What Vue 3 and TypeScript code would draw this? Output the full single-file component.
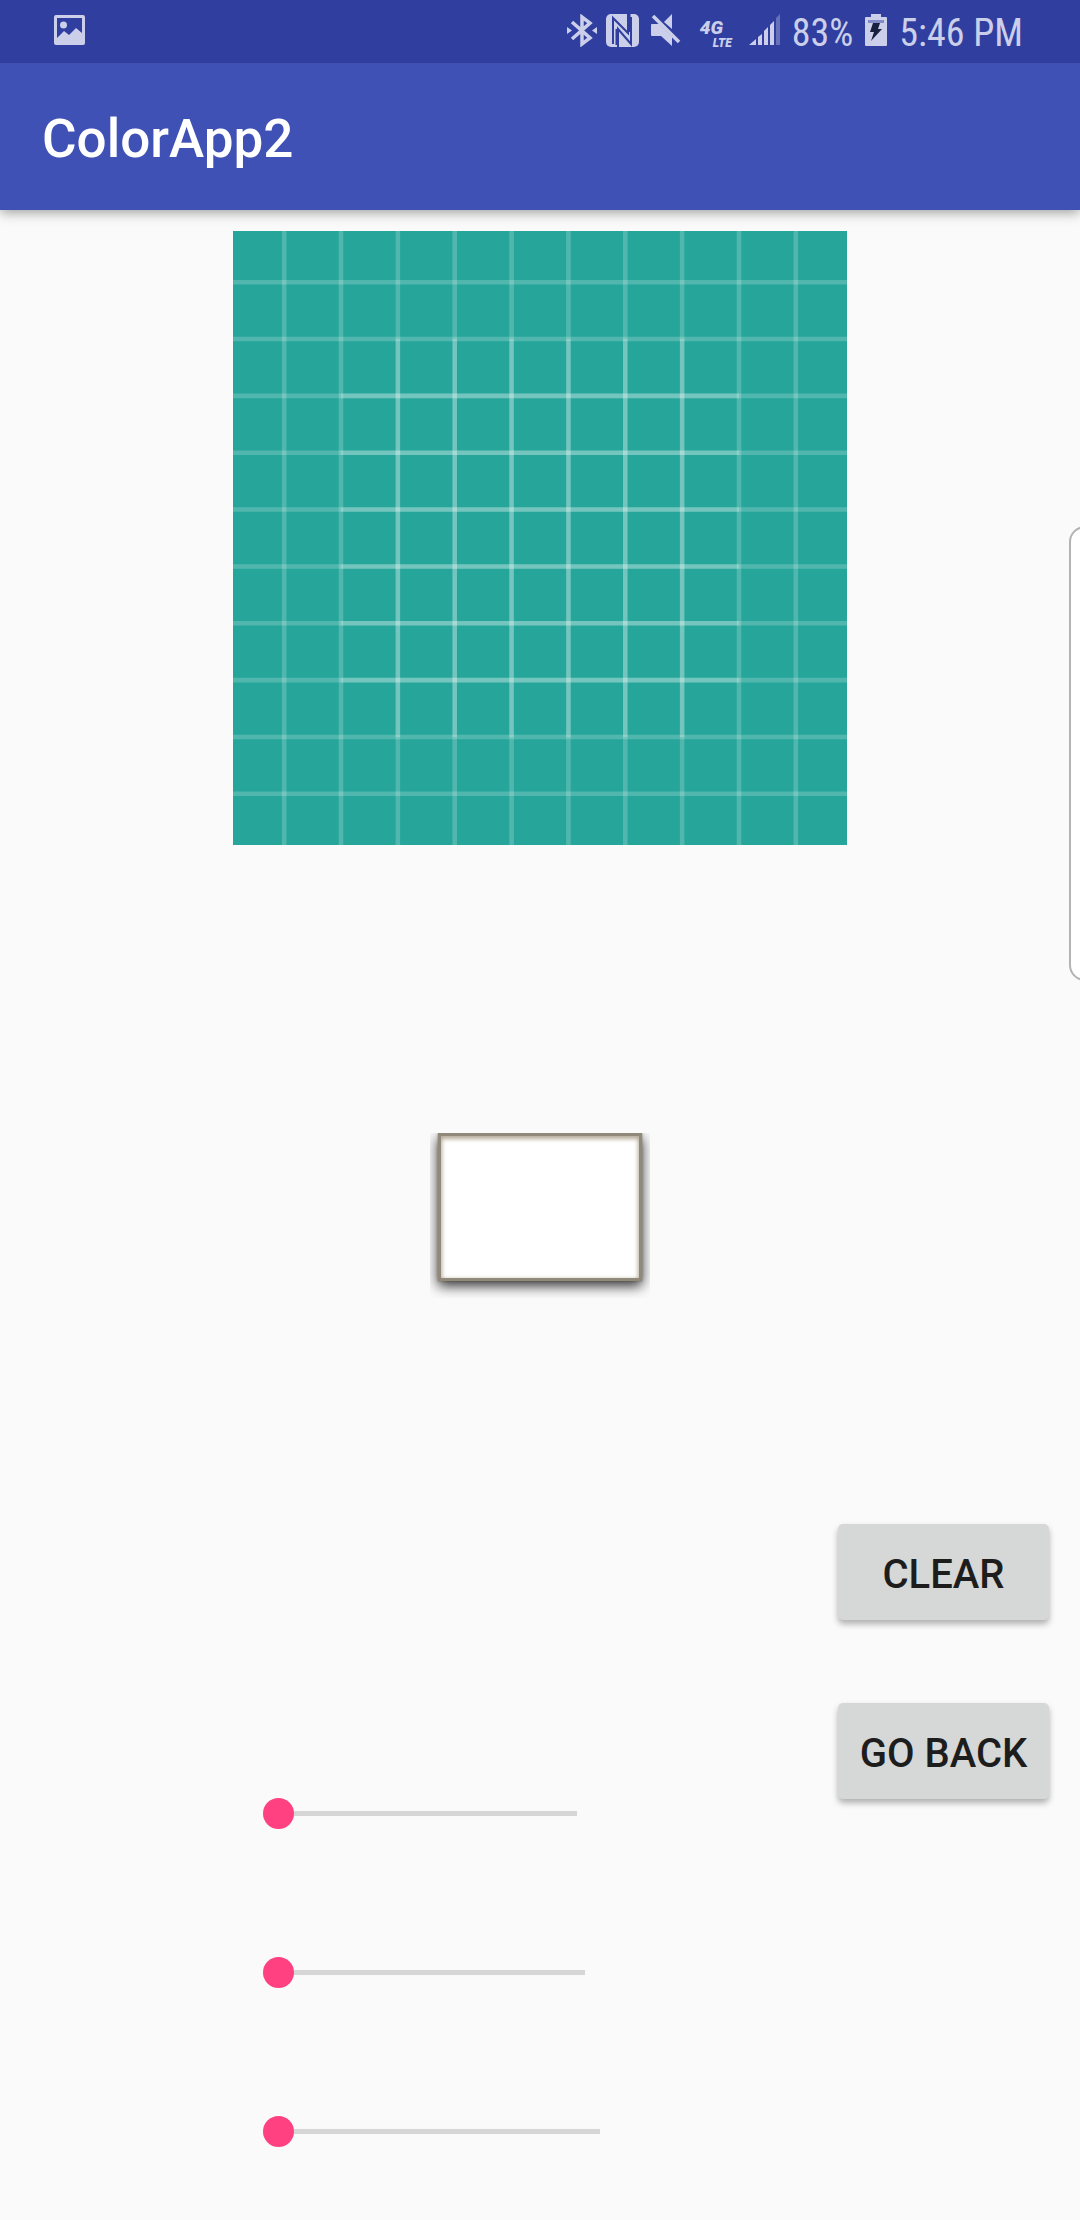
<script setup lang="ts">
import { ref } from 'vue'

interface Channel {
  name: string
  width: number
  value: number
}

const outerLines: number[] = [9, 19, 29, 39, 49, 59, 69, 79, 89, 99]
const innerLines: number[] = [29, 39, 49, 59, 69, 79]

const channels = ref<Channel[]>([
  { name: 'Red', width: 314, value: 0 },
  { name: 'Green', width: 322, value: 0 },
  { name: 'Blue', width: 337, value: 0 },
])

function clearChannels(): void {
  channels.value.forEach((channel) => {
    channel.value = 0
  })
}

function goBack(): void {
  window.history.back()
}
</script>

<template>
  <div class="screen">
    <header class="top">
      <div class="status">
        <svg class="picture-icon" width="31" height="30" viewBox="0 0 31 30" aria-hidden="true">
          <path fill-rule="evenodd" d="M2 0H29Q31 0 31 2V28Q31 30 29 30H2Q0 30 0 28V2Q0 0 2 0ZM3 3V23L10 16L15 20L22 13L28 18V3Z" />
          <circle cx="9.500" cy="10" r="3.500" />
        </svg>
        <div class="indicators">
          <svg class="bluetooth" width="30" height="33" viewBox="0 0 30 33" aria-hidden="true">
            <path d="M5 8L23 24L15 30V3L23 9L5 25" fill="none" stroke="currentColor" stroke-width="3.500" />
            <path d="M0 13L5 16.500L0 20ZM30 13L25 16.500L30 20Z" />
          </svg>
          <svg class="nfc" width="33" height="33" viewBox="0 0 33 33" aria-hidden="true">
            <rect width="33" height="33" rx="5" />
            <path class="nfc-cut" d="M7 30V4L22 19V0M12 33V15L25 30V3" />
            <path class="nfc-cut" d="M23.500 0V18M10.500 15V31" />
          </svg>
          <svg class="mute" width="30" height="33" viewBox="0 0 30 33" aria-hidden="true">
            <path d="M1 10H8L21 23V32L10 22H1Q0 22 0 21V11Q0 10 1 10ZM13 8L21 0V15Z" />
            <path d="M2 2L28 28" stroke="currentColor" stroke-width="3.500" />
          </svg>
          <span class="network"><span class="gen">4G</span><span class="lte">LTE</span></span>
          <svg class="signal" width="31" height="32" viewBox="0 0 31 32" aria-hidden="true">
            <path d="M0 31L7 25V31ZM9 23L13 20V31H9ZM15 17L19 13V31H15ZM21 11L25 7V31H21Z" />
            <path d="M27 4L31 0V31H27Z" opacity="0.350" />
          </svg>
          <span class="status-text">83%</span>
          <svg class="battery" width="22" height="33" viewBox="0 0 22 33" aria-hidden="true">
            <path d="M6 0H16V3H21Q22 3 22 4V31Q22 32 21 32H1Q0 32 0 31V4Q0 3 1 3H6Z" />
            <path d="M3 6H19V9H3Z" fill="#838bc6" />
            <path d="M8 9H15L13 15H17L6 27L9 18H5Z" fill="#17203d" />
          </svg>
          <span class="status-text">5:46 PM</span>
        </div>
      </div>
      <div class="app-bar">
        <h1 class="title">ColorApp2</h1>
      </div>
    </header>

    <main class="content">
      <svg class="canvas" viewBox="0 0 108 108" role="img" aria-label="Drawing canvas">
        <rect width="108" height="108" fill="#26a69a" />
        <g stroke="#fff" stroke-opacity="0.200" stroke-width="0.800">
          <line v-for="n in outerLines" :key="'v' + n" :x1="n" y1="0" :x2="n" y2="108" />
          <line v-for="n in outerLines" :key="'h' + n" x1="0" :y1="n" x2="108" :y2="n" />
          <line v-for="n in innerLines" :key="'ih' + n" x1="19" :y1="n" x2="89" :y2="n" />
          <line v-for="n in innerLines" :key="'iv' + n" :x1="n" y1="19" :x2="n" y2="89" />
        </g>
      </svg>

      <div class="preview">
        <div class="preview-frame"></div>
      </div>

      <section class="controls">
        <div class="sliders">
          <input
            v-for="channel in channels"
            :key="channel.name"
            v-model.number="channel.value"
            class="slider"
            type="range"
            min="0"
            max="255"
            :aria-label="channel.name"
            :style="{ width: channel.width + 'px' }"
          />
        </div>
        <div class="actions">
          <button class="action" type="button" @click="clearChannels">CLEAR</button>
          <button class="action" type="button" @click="goBack">GO BACK</button>
        </div>
      </section>
    </main>

    <div class="edge-handle"></div>
  </div>
</template>

<style>
body {
  margin: 0;
  background: #fafafa;
}
</style>

<style scoped>
.screen {
  position: relative;
  min-height: 100vh;
  overflow: hidden;
  background: #fafafa;
  font-family: Roboto, 'Liberation Sans', sans-serif;
}

.top {
  box-shadow: 0 2px 12px rgba(0, 0, 0, 0.4);
}

.status {
  display: flex;
  justify-content: space-between;
  box-sizing: border-box;
  height: 63px;
  padding: 14px 57px 0 54px;
  background: #303f9f;
  color: #cbcfe9;
}

.status svg {
  display: block;
  flex: none;
  fill: currentColor;
}

.picture-icon {
  margin-top: 1px;
}

.indicators {
  display: flex;
  align-items: flex-start;
}

.nfc {
  margin-left: 9px;
}

.status .nfc-cut {
  fill: none;
  stroke: #303f9f;
  stroke-width: 2;
}

.mute {
  margin-left: 12px;
}

.network {
  display: flex;
  flex-direction: column;
  width: 32px;
  margin: 6px 17px 0 19px;
  font-style: italic;
  font-weight: 900;
}

.gen {
  font-size: 19px;
  line-height: 16px;
}

.lte {
  align-self: flex-end;
  font-size: 12px;
  line-height: 14px;
}

.status-text {
  font-family: 'Roboto Condensed', Roboto, sans-serif;
  font-size: 38px;
  line-height: 38px;
  white-space: nowrap;
}

.signal {
  margin-right: 12px;
}

.battery {
  margin: 0 12px;
}

.app-bar {
  display: flex;
  align-items: center;
  box-sizing: border-box;
  height: 147px;
  padding: 4px 42px 0;
  background: #3f51b5;
}

.title {
  margin: 0;
  color: #fff;
  font-size: 53px;
  font-weight: 500;
  line-height: 64px;
}

.content {
  display: flex;
  flex-direction: column;
  align-items: center;
  padding-top: 21px;
}

.canvas {
  display: block;
  width: 614px;
  max-width: 100%;
}

.preview {
  box-sizing: border-box;
  width: 220px;
  height: 165px;
  margin-top: 288px;
  padding: 0 8px 17px;
  overflow: hidden;
}

.preview-frame {
  box-sizing: border-box;
  height: 148px;
  border: 3px solid #91897a;
  background: #fff;
  box-shadow:
    inset 0 2px 4px 1px #b5ab98,
    0 0 2px rgba(90, 80, 60, 0.6),
    0 5px 12px rgba(0, 0, 0, 0.8);
}

.controls {
  display: flex;
  justify-content: space-between;
  align-self: stretch;
  margin-top: 226px;
  padding: 0 31px 72px 263px;
}

.sliders {
  display: flex;
  flex-direction: column;
  gap: 128px;
  padding-top: 274px;
}

.slider {
  display: block;
  height: 31px;
  margin: 0;
  appearance: none;
  background: linear-gradient(#d6d6d6, #d6d6d6) center / 100% 5px no-repeat;
}

.slider::-webkit-slider-thumb {
  appearance: none;
  width: 31px;
  height: 31px;
  border: 0;
  border-radius: 50%;
  background: #ff4081;
}

.actions {
  display: flex;
  flex-direction: column;
  gap: 83px;
}

.action {
  width: 211px;
  height: 96px;
  padding: 6px 0 0;
  border: 0;
  border-radius: 5px;
  background: #d6d8d7;
  box-shadow: 0 4px 6px rgba(0, 0, 0, 0.3);
  color: #1d1d1d;
  font-family: inherit;
  font-size: 40px;
  font-weight: 500;
  line-height: 48px;
  white-space: nowrap;
}

.edge-handle {
  position: absolute;
  top: 526px;
  right: -10px;
  box-sizing: border-box;
  width: 21px;
  height: 455px;
  border: 2px solid #b2b3b3;
  border-radius: 16px 0 0 16px;
  background: #fff;
}
</style>
